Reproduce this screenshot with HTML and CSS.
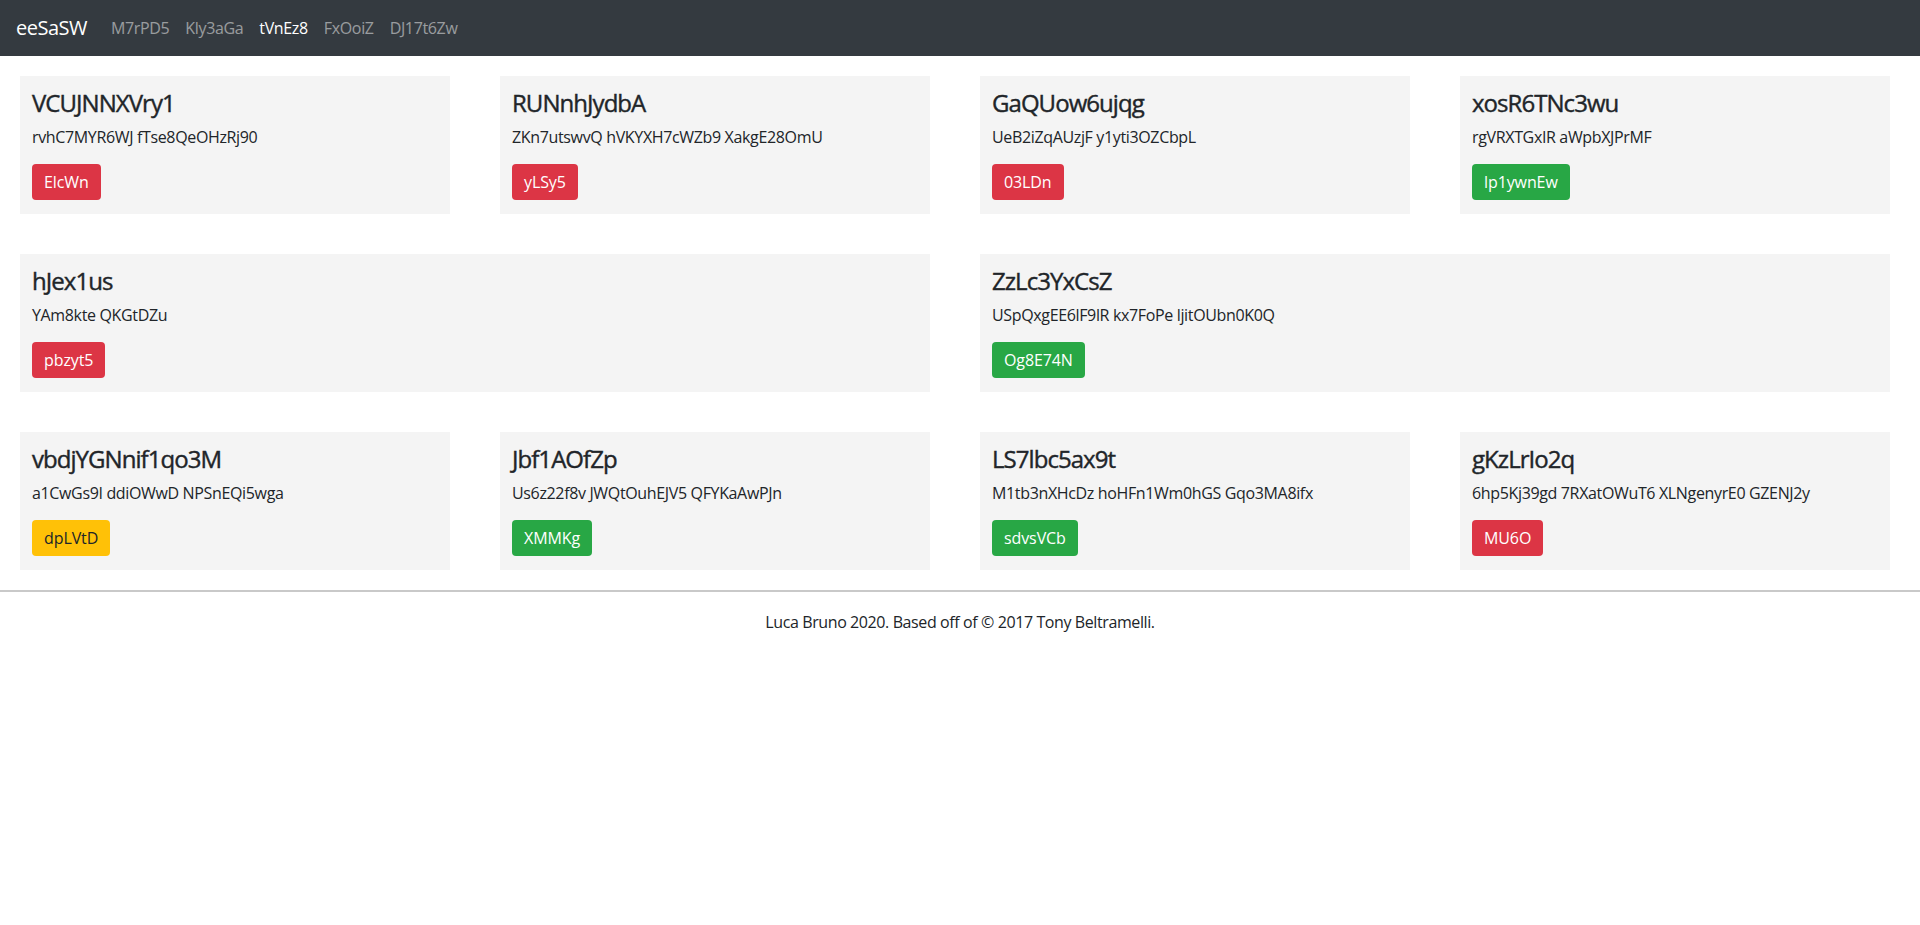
FILE: index.html
```html
<!DOCTYPE html>
<html lang="en">
<head>
<meta charset="utf-8">
<title>eeSaSW</title>
<link rel="stylesheet" href="styles.css">
</head>
<body>
<header class="navbar">
  <a class="brand" href="#">eeSaSW</a>
  <nav class="nav">
    <a class="nav-link" href="#">M7rPD5</a>
    <a class="nav-link" href="#">Kly3aGa</a>
    <a class="nav-link active" href="#">tVnEz8</a>
    <a class="nav-link" href="#">FxOoiZ</a>
    <a class="nav-link" href="#">DJ17t6Zw</a>
  </nav>
</header>
<main class="grid">
  <section class="card">
    <h4 class="card-title">VCUJNNXVry1</h4>
    <p class="card-text">rvhC7MYR6WJ fTse8QeOHzRj90</p>
    <a class="btn btn-danger" href="#">ElcWn</a>
  </section>
  <section class="card">
    <h4 class="card-title">RUNnhJydbA</h4>
    <p class="card-text">ZKn7utswvQ hVKYXH7cWZb9 XakgE28OmU</p>
    <a class="btn btn-danger" href="#">yLSy5</a>
  </section>
  <section class="card">
    <h4 class="card-title">GaQUow6ujqg</h4>
    <p class="card-text">UeB2iZqAUzjF y1yti3OZCbpL</p>
    <a class="btn btn-danger" href="#">03LDn</a>
  </section>
  <section class="card">
    <h4 class="card-title">xosR6TNc3wu</h4>
    <p class="card-text">rgVRXTGxIR aWpbXJPrMF</p>
    <a class="btn btn-success" href="#">lp1ywnEw</a>
  </section>

  <section class="card span-2">
    <h4 class="card-title">hJex1us</h4>
    <p class="card-text">YAm8kte QKGtDZu</p>
    <a class="btn btn-danger" href="#">pbzyt5</a>
  </section>
  <section class="card span-2">
    <h4 class="card-title">ZzLc3YxCsZ</h4>
    <p class="card-text">USpQxgEE6lF9lR kx7FoPe ljitOUbn0K0Q</p>
    <a class="btn btn-success" href="#">Og8E74N</a>
  </section>

  <section class="card">
    <h4 class="card-title">vbdjYGNnif1qo3M</h4>
    <p class="card-text">a1CwGs9I ddiOWwD NPSnEQi5wga</p>
    <a class="btn btn-warning" href="#">dpLVtD</a>
  </section>
  <section class="card">
    <h4 class="card-title">Jbf1AOfZp</h4>
    <p class="card-text">Us6z22f8v JWQtOuhEJV5 QFYKaAwPJn</p>
    <a class="btn btn-success" href="#">XMMKg</a>
  </section>
  <section class="card">
    <h4 class="card-title">LS7lbc5ax9t</h4>
    <p class="card-text">M1tb3nXHcDz hoHFn1Wm0hGS Gqo3MA8ifx</p>
    <a class="btn btn-success" href="#">sdvsVCb</a>
  </section>
  <section class="card">
    <h4 class="card-title">gKzLrIo2q</h4>
    <p class="card-text">6hp5Kj39gd 7RXatOWuT6 XLNgenyrE0 GZENJ2y</p>
    <a class="btn btn-danger" href="#">MU6O</a>
  </section>
</main>
<footer class="footer">
  <p class="footer-text">Luca Bruno 2020. Based off of © 2017 Tony Beltramelli.</p>
</footer>
</body>
</html>
```

FILE: styles.css
```css
* {
  box-sizing: border-box;
}

body {
  margin: 0;
  font-family: "Open Sans", "Noto Sans", "Liberation Sans", sans-serif;
  font-size: 16px;
  line-height: 24px;
  color: #212529;
  background: #ffffff;
}

a {
  text-decoration: none;
}

.navbar {
  display: flex;
  align-items: center;
  height: 56px;
  padding: 8px 16px;
  background: #343a40;
}

.brand {
  font-size: 20px;
  line-height: 30px;
  padding: 5px 0;
  margin-right: 16px;
  color: #ffffff;
  letter-spacing: -0.5px;
}

.nav {
  display: flex;
}

.nav-link {
  padding: 8px;
  color: rgba(255, 255, 255, 0.5);
  letter-spacing: -0.35px;
}

.nav-link.active {
  color: #ffffff;
}

.grid {
  display: grid;
  grid-template-columns: repeat(4, 1fr);
  column-gap: 50px;
  row-gap: 40px;
  padding: 20px 30px 0 20px;
}

.span-2 {
  grid-column: span 2;
}

.card {
  background: #f4f4f4;
  padding: 12px;
  height: 138px;
}

.card-title {
  margin: 0 0 8px;
  font-size: 24px;
  line-height: 29px;
  font-weight: 400;
  letter-spacing: -0.95px;
  -webkit-text-stroke: 0.4px currentColor;
}

.card-text {
  margin: 0 0 15px;
  font-size: 16px;
  line-height: 24px;
  letter-spacing: -0.35px;
}

.btn {
  display: inline-block;
  padding: 6px 12px;
  font-size: 16px;
  line-height: 24px;
  border-radius: 4px;
  color: #ffffff;
  letter-spacing: -0.1px;
}

.btn-danger {
  background: #dc3545;
}

.btn-success {
  background: #28a745;
}

.btn-warning {
  background: #ffc107;
  color: #212529;
}

.footer {
  margin-top: 20px;
  border-top: 2px solid #c9c9c9;
  padding-top: 18px;
  text-align: center;
}

.footer-text {
  margin: 0;
  font-size: 16px;
  line-height: 24px;
  letter-spacing: -0.4px;
}
```
